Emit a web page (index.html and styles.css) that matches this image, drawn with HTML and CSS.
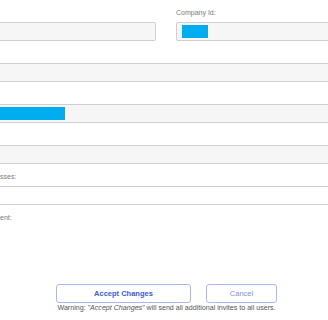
FILE: index.html
```html
<!DOCTYPE html>
<html lang="en">
<head>
  <meta charset="UTF-8">
  <title>Company Settings</title>
  <link rel="stylesheet" href="styles.css">
</head>
<body>

  <form class="settings" onsubmit="return false">
    <div class="pair">
      <div class="field">
        <span class="caption"></span>
        <span class="box cut"></span>
      </div>
      <div class="field">
        <span class="caption">Company Id:</span>
        <span class="box"><span class="mask mask-id"></span></span>
      </div>
    </div>

    <div class="field">
      <span class="caption"></span>
      <span class="box cut"></span>
    </div>

    <div class="field">
      <span class="caption"></span>
      <span class="box cut"><span class="mask mask-name"></span></span>
    </div>

    <div class="field">
      <span class="caption"></span>
      <span class="box cut"></span>
    </div>

    <div class="field">
      <span class="caption">sses:</span>
      <span class="box cut plain"></span>
    </div>

    <div class="field">
      <span class="caption">ent:</span>
      <span class="note-area"></span>
    </div>

    <div class="actions">
      <div class="buttons">
        <button type="submit" class="btn btn-main">Accept Changes</button>
        <button type="button" class="btn btn-cancel">Cancel</button>
      </div>
      <p class="warning">Warning: <em>"Accept Changes"</em> will send all additional invites to all users.</p>
    </div>
  </form>

</body>
</html>
```

FILE: styles.css
```css
html, body {
  margin: 0;
  background: #ffffff;
  overflow: hidden;
}

body {
  font-family: "Liberation Sans", Arial, sans-serif;
  width: 328px;
  height: 320px;
}

.settings {
  width: 340px;
  padding-top: 7px;
}

.pair {
  display: grid;
  grid-template-columns: 156px 164px;
  column-gap: 20px;
}

.field {
  display: flex;
  flex-direction: column;
  gap: 4px;
  margin-bottom: 7px;
}

.caption {
  height: 11px;
  font-size: 7px;
  line-height: 11px;
  color: #7a7a7a;
}

.box {
  display: flex;
  align-items: center;
  height: 19px;
  box-sizing: border-box;
  padding: 0 5px;
  border: 1px solid #cfcfcf;
  border-radius: 2px;
  background: #f6f6f6;
}

.box.cut {
  border-left: none;
  border-radius: 0 2px 2px 0;
  padding-left: 0;
}

.box.plain {
  background: #ffffff;
}

.mask {
  display: block;
  height: 13px;
  background: #00aeef;
}

.mask-id {
  width: 26px;
}

.mask-name {
  width: 65px;
}

.note-area {
  display: block;
  height: 50px;
}

.actions {
  width: 333px;
  text-align: center;
}

.buttons {
  display: flex;
  justify-content: center;
  gap: 15px;
}

.btn {
  height: 19px;
  padding: 0;
  border: 1px solid #a9b9f0;
  border-radius: 3px;
  background: #ffffff;
  font-family: "Liberation Sans", Arial, sans-serif;
  font-size: 7.5px;
  cursor: pointer;
}

.btn-main {
  width: 135px;
  color: #3a5ad6;
  font-weight: bold;
}

.btn-cancel {
  width: 71px;
  color: #7f92e3;
}

.warning {
  margin: 1px 0 0;
  font-size: 7.1px;
  color: #555555;
}
```
